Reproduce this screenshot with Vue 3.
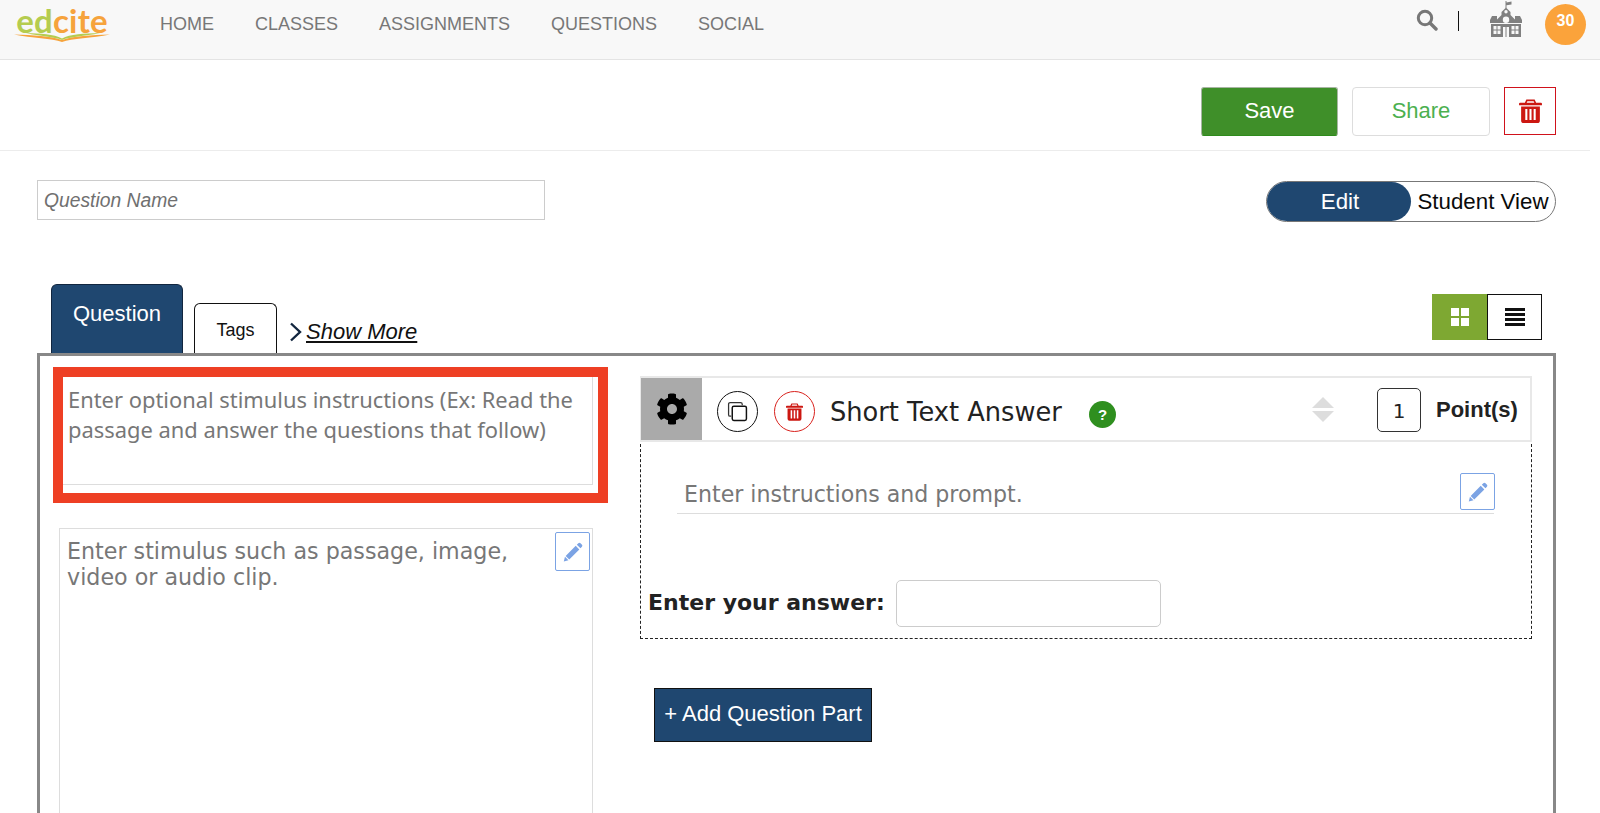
<script setup>
const navItems = ['HOME', 'CLASSES', 'ASSIGNMENTS', 'QUESTIONS', 'SOCIAL']
const gear = 'M487.4 315.7l-42.6-24.6c4.3-23.2 4.3-47 0-70.2l42.6-24.6c4.9-2.8 7.1-8.6 5.5-14-11.1-35.6-30-67.8-54.7-94.6-3.8-4.1-10-5.1-14.8-2.3L380.8 110c-17.9-15.4-38.5-27.3-60.8-35.1V25.8c0-5.6-3.9-10.5-9.4-11.7-36.7-8.2-74.3-7.8-109.2 0-5.5 1.2-9.4 6.1-9.4 11.7V75c-22.2 7.9-42.8 19.8-60.8 35.1L88.7 85.5c-4.9-2.8-11-1.9-14.8 2.3-24.7 26.7-43.6 58.9-54.7 94.6-1.7 5.4.6 11.2 5.5 14L67.3 221c-4.3 23.2-4.3 47 0 70.2l-42.6 24.6c-4.9 2.8-7.1 8.6-5.5 14 11.1 35.6 30 67.8 54.7 94.6 3.8 4.1 10 5.1 14.8 2.3l42.6-24.6c17.9 15.4 38.5 27.3 60.8 35.1v49.2c0 5.6 3.9 10.5 9.4 11.7 36.7 8.2 74.3 7.8 109.2 0 5.5-1.2 9.4-6.1 9.4-11.7v-49.2c22.2-7.9 42.8-19.8 60.8-35.1l42.6 24.6c4.9 2.8 11 1.9 14.8-2.3 24.7-26.7 43.6-58.9 54.7-94.6 1.5-5.5-.7-11.3-5.6-14.1zM256 336c-44.1 0-80-35.9-80-80s35.9-80 80-80 80 35.9 80 80-35.9 80-80 80z'
const pencil = 'M392 32Q420 8 448 30L486 68Q508 96 484 124L446 162 354 70zM326 98 418 190 160 448 68 356zM50 376 140 466 20 500z'
const trash = 'M7 1.500h8l1.400 3H21a1 1 0 0 1 1 1V7H0V5.500a1 1 0 0 1 1-1h4.600zM8 3 7.300 4.500h7.400L14 3zM2 8.200h18V21.500a2.500 2.500 0 0 1-2.500 2.500h-13A2.500 2.500 0 0 1 2 21.500zM6 10.500V21h2V10.500zM10 10.500V21h2V10.500zM14 10.500V21h2V10.500z'
</script>

<template>
  <div class="page">
    <header class="nav">
      <div class="logo">
        <div class="logo-word"><span class="ed">ed</span><span class="cite">cite</span></div>
        <svg class="swoosh" viewBox="0 0 96 9" width="96" height="9">
          <path d="M0 1.500C18 2 38 3 48 7 58 3 78 2 96 1.500 78 5 58 5.500 48 9 38 5.500 18 5 0 1.500z" fill="#f6a33c" />
          <path d="M12 0C26 .5 40 1 48 5.500 56 1 70 .5 86 0 70 3.500 56 3.500 48 7 40 3.500 26 3.500 12 0z" fill="#b5cc4f" />
        </svg>
      </div>
      <nav class="menu">
        <a v-for="item in navItems" :key="item" class="menu-item">{{ item }}</a>
      </nav>
      <div class="nav-right">
        <svg class="search" viewBox="0 0 22 22" width="22" height="22">
          <circle cx="9" cy="9" r="6.700" fill="none" stroke="#777" stroke-width="3" />
          <path d="M14 14l6 6" stroke="#777" stroke-width="3.400" stroke-linecap="round" />
        </svg>
        <span class="nav-sep"></span>
        <svg class="school" viewBox="0 0 32 36" width="32" height="36">
          <path d="M15.500 0h1v1.500l5-1v3l-5 .8V7h-1z" fill="#808080" />
          <path fill="#808080" fill-rule="evenodd" d="M11.500 11 16 6.500 20.500 11v3L25 18.500V15h5l2 4v3H0v-3l2-4h5v3.500L11.500 14zM16 9a1.700 1.700 0 1 0 0 3.400A1.700 1.700 0 0 0 16 9zM16 15.500a3.200 3.200 0 1 0 0 6.400 3.200 3.200 0 0 0 0-6.400z" />
          <path fill="#808080" fill-rule="evenodd" d="M1 23h30v13H1zM3.500 25v3.500h3V25zM7.500 25v3.500h3V25zM21.500 25v3.500h3V25zM25.500 25v3.500h3V25zM3.500 29.500V33h3v-3.500zM7.500 29.500V33h3v-3.500zM21.500 29.500V33h3v-3.500zM25.500 29.500V33h3v-3.500zM13 26v10h2.500V26zM16.500 26v10H19V26z" />
        </svg>
        <div class="badge">30</div>
      </div>
    </header>

    <section class="actions">
      <button class="btn save">Save</button>
      <button class="btn share">Share</button>
      <button class="btn remove">
        <svg viewBox="0 0 22 24" width="23" height="25"><path :d="trash" fill="#cc1711" fill-rule="evenodd" /></svg>
      </button>
    </section>

    <section class="meta">
      <div class="name-input">Question Name</div>
      <div class="mode">
        <span class="mode-edit">Edit</span>
        <span class="mode-view">Student View</span>
      </div>
    </section>

    <section class="tabs">
      <div class="tab tab-active">Question</div>
      <div class="tab tab-tags">Tags</div>
      <div class="more">
        <svg viewBox="0 0 13 20" width="13" height="20"><path d="M2 1.500 11 10 2 18.500" fill="none" stroke="#12263f" stroke-width="2.400" /></svg>
        <a class="more-link">Show More</a>
      </div>
      <div class="views">
        <div class="view view-grid">
          <svg viewBox="0 0 18 18" width="18" height="18"><path d="M0 0h8v8H0zM10 0h8v8h-8zM0 10h8v8H0zM10 10h8v8h-8z" fill="#fff" /></svg>
        </div>
        <div class="view view-list">
          <svg viewBox="0 0 20 18" width="20" height="18"><path d="M0 0h20v3H0zM0 5h20v3H0zM0 10h20v3H0zM0 15h20v3H0z" fill="#111" /></svg>
        </div>
      </div>
    </section>

    <main class="panel">
      <div class="left">
        <div class="highlight">
          <div class="instructions">Enter optional stimulus instructions (Ex: Read the passage and answer the questions that follow)</div>
        </div>
        <div class="stimulus">
          <p class="stimulus-text">Enter stimulus such as passage, image, video or audio clip.</p>
          <button class="pencil stim-pencil">
            <svg viewBox="0 0 512 512" width="20" height="20"><path :d="pencil" fill="#7ba3e4" /></svg>
          </button>
        </div>
      </div>

      <div class="right">
        <div class="part-head">
          <div class="gear-box">
            <svg viewBox="0 0 512 512" width="32" height="32"><path :d="gear" fill="#000" /></svg>
          </div>
          <div class="circle copy">
            <svg viewBox="0 0 20 20" width="21" height="21">
              <path d="M4 14.500H3a1.500 1.500 0 0 1-1.500-1.500V3A1.500 1.500 0 0 1 3 1.500h10A1.500 1.500 0 0 1 14.500 3v1" fill="none" stroke="#333" stroke-width="1.200" />
              <rect x="5" y="5" width="13.500" height="13.500" rx="1.500" fill="none" stroke="#111" stroke-width="1.400" />
            </svg>
          </div>
          <div class="circle del">
            <svg viewBox="0 0 22 24" width="17" height="19"><path :d="trash" fill="#cc1711" fill-rule="evenodd" /></svg>
          </div>
          <div class="part-title">Short Text Answer</div>
          <div class="help">?</div>
          <div class="sorter">
            <span class="arrow up"></span>
            <span class="arrow down"></span>
          </div>
          <div class="points-box">1</div>
          <div class="points-label">Point(s)</div>
        </div>
        <div class="part-body">
          <div class="prompt">
            <span class="prompt-text">Enter instructions and prompt.</span>
            <button class="pencil prompt-pencil">
              <svg viewBox="0 0 512 512" width="20" height="20"><path :d="pencil" fill="#7ba3e4" /></svg>
            </button>
          </div>
          <div class="answer">
            <label class="answer-label">Enter your answer:</label>
            <div class="answer-input"></div>
          </div>
        </div>
        <button class="add-part">+ Add Question Part</button>
      </div>
    </main>
  </div>
</template>

<style>
html, body { margin: 0; overflow: hidden; background: #fff; }
</style>

<style scoped>
.page { width: 1600px; height: 813px; overflow: hidden; font-family: "Liberation Sans", Arial, sans-serif; }
button { font-family: inherit; cursor: pointer; }

.nav { height: 59px; background: #f8f8f8; border-bottom: 1px solid #e4e4e4; display: flex; align-items: flex-start; }
.logo { width: 96px; margin: 0 0 0 14px; position: relative; height: 44px; }
.logo-word { font-family: Lato, sans-serif; font-size: 33px; line-height: normal; font-weight: 700; letter-spacing: 0.2px; text-align: center; }
.ed { color: #b5cc4f; }
.cite { color: #f6a33c; }
.swoosh { position: absolute; left: 0; top: 33px; }
.menu { display: flex; margin: 14px 0 0 50px; gap: 41px; }
.menu-item { font-size: 18px; line-height: 20px; color: #777; }
.nav-right { margin-left: auto; display: flex; align-items: flex-start; }
.search { margin-top: 9px; }
.nav-sep { width: 1px; height: 20px; background: #111; margin: 11px 0 0 20px; }
.school { margin: 1px 0 0 31px; }
.badge { width: 41px; height: 41px; border-radius: 50%; background: #fba33b; color: #fff; font-weight: 700; font-size: 16px; line-height: 34px; text-align: center; margin: 4px 14px 0 23px; }

.actions { width: 1590px; height: 91px; box-sizing: border-box; border-bottom: 1px solid #ececec; display: flex; justify-content: flex-end; align-items: flex-start; padding: 27px 34px 0 0; }
.btn { height: 49px; box-sizing: border-box; font-size: 22px; padding: 0 0 2px; }
.save { width: 137px; background: #3f8f29; color: #fff; border: 1px solid #a9b5a4; border-bottom-color: #2e8b1c; border-radius: 3px; }
.share { width: 138px; margin-left: 14px; background: #fff; color: #4cb050; border: 1px solid #ddd; border-radius: 4px; }
.remove { width: 52px; margin-left: 14px; height: 48px; background: #fff; border: 1px solid #d0121b; display: flex; align-items: center; justify-content: center; }

.meta { display: flex; justify-content: space-between; padding: 29px 44px 0 37px; height: 133px; box-sizing: border-box; }
.name-input { width: 508px; height: 40px; box-sizing: border-box; border: 1px solid #ccc; font-style: italic; font-size: 19.300px; line-height: 40px; color: #707070; padding-left: 6px; }
.mode { width: 290px; height: 41px; box-sizing: border-box; margin-top: 1px; border: 1px solid #777; border-radius: 21px; display: flex; align-items: stretch; font-size: 22.300px; }
.mode-edit { width: 144px; background: #1f4770; color: #fff; border-radius: 20px; text-align: center; line-height: 39px; padding-left: 2px; box-sizing: border-box; }
.mode-view { flex: 1; text-align: center; line-height: 39px; color: #0a0a0a; white-space: nowrap; }

.tabs { height: 70px; box-sizing: border-box; margin-top: -1px; padding: 0 44px 0 51px; display: flex; align-items: flex-end; }
.tab { box-sizing: border-box; border-radius: 6px 6px 0 0; text-align: center; }
.tab-active { width: 132px; height: 69px; background: #1f4770; border: 1px solid #12263f; border-bottom: 0; color: #fff; font-size: 22px; line-height: 58px; }
.tab-tags { width: 83px; height: 50px; margin-left: 11px; border: 1px solid #111; border-bottom: 0; font-size: 18px; line-height: 52px; color: #111; }
.more { display: flex; align-items: center; margin: 0 0 6px 12px; height: 30px; }
.more-link { font-style: italic; text-decoration: underline; font-size: 22px; color: #111; margin-left: 4px; }
.views { margin-left: auto; display: flex; align-self: flex-start; margin-top: 11px; margin-right: 14px; }
.view { width: 56px; height: 46px; box-sizing: border-box; display: flex; align-items: center; justify-content: center; }
.view-grid { background: #7ea832; width: 55px; }
.view-list { width: 55px; border: 1px solid #111; background: #fff; }

.panel { width: 1519px; height: 600px; margin-left: 37px; box-sizing: border-box; border: 3px solid #888; display: flex; align-items: flex-start; padding-top: 11px; }
.left { width: 600px; flex: none; }
.highlight { margin-left: 13px; width: 555px; height: 136px; box-sizing: border-box; border: 10px solid #ee3f24; background: #fff; }
.instructions { height: 108px; width: 530px; box-sizing: border-box; border-right: 1px solid #ddd; border-bottom: 1px solid #ddd; padding: 8px 10px 0 5px; font-family: "Noto Sans", sans-serif; font-size: 21.900px; line-height: 30px; color: #777; }
.stimulus { position: relative; margin: 25px 0 0 19px; width: 534px; height: 500px; box-sizing: border-box; border: 1px solid #ddd; padding: 9px 40px 0 7px; }
.stimulus-text { margin: 0; font-family: "DejaVu Sans", sans-serif; font-size: 22.200px; line-height: 26px; color: #777; }
.pencil { width: 35px; height: 39px; padding: 0; background: #fff; border: 1px solid #7ba3e4; border-radius: 2px; display: flex; align-items: center; justify-content: center; }
.stim-pencil { position: absolute; top: 3px; right: 2px; }

.right { width: 892px; margin-top: 9px; flex: none; }
.part-head { height: 66px; box-sizing: border-box; border: 2px solid #e8e8e8; border-left-width: 1px; display: flex; align-items: center; }
.gear-box { width: 61px; height: 62px; background: #aaa; display: flex; align-items: center; justify-content: center; }
.circle { width: 41px; height: 41px; box-sizing: border-box; border-radius: 50%; display: flex; align-items: center; justify-content: center; margin-top: 4px; }
.copy { border: 1px solid #111; margin-left: 15px; }
.del { border: 1px solid #d9211c; margin-left: 16px; }
.part-title { font-family: "DejaVu Sans", sans-serif; font-size: 25.700px; color: #222; margin-left: 15px; width: 259px; white-space: nowrap; padding-top: 5px; }
.help { width: 27px; height: 27px; border-radius: 50%; background: #2f8f1f; color: #fff; font-size: 15px; font-weight: 700; line-height: 27px; text-align: center; margin-top: 10px; }
.sorter { margin-left: 196px; display: flex; flex-direction: column; gap: 3px; }
.arrow { width: 0; height: 0; border-left: 11px solid transparent; border-right: 11px solid transparent; }
.up { border-bottom: 11px solid #ddd; }
.down { border-top: 11px solid #ddd; }
.points-box { width: 44px; height: 44px; box-sizing: border-box; border: 1px solid #333; border-radius: 5px; margin: 2px 0 0 43px; font-family: "DejaVu Sans", sans-serif; font-size: 20px; line-height: 45px; text-align: center; color: #222; }
.points-label { margin: 1px 0 0 15px; font-weight: 700; font-size: 22px; color: #222; white-space: nowrap; }

.part-body { height: 195px; box-sizing: border-box; margin-top: 2px; padding-top: 29px; border: 1px dashed #222; border-top: 0; }
.prompt { margin: 0 37px 0 36px; height: 41px; box-sizing: border-box; border-bottom: 1px solid #ddd; display: flex; align-items: flex-start; justify-content: space-between; }
.prompt-text { font-family: "DejaVu Sans", sans-serif; font-size: 22.100px; line-height: 42px; color: #777; padding-left: 7px; }
.prompt-pencil { width: 35px; height: 37px; margin-right: -1px; }
.answer { display: flex; align-items: center; margin-top: 66px; padding-left: 7px; }
.answer-label { font-family: "DejaVu Sans", sans-serif; font-weight: 700; font-size: 22px; line-height: 26px; margin-top: -2px; color: #222; white-space: nowrap; }
.answer-input { width: 265px; height: 47px; box-sizing: border-box; border: 1px solid #ccc; border-radius: 5px; margin-left: 11px; }

.add-part { display: block; margin: 49px 0 0 14px; width: 218px; height: 54px; background: #1f4770; border: 1px solid #111; color: #fff; font-size: 22px; padding: 0 0 2px; white-space: nowrap; }
</style>
